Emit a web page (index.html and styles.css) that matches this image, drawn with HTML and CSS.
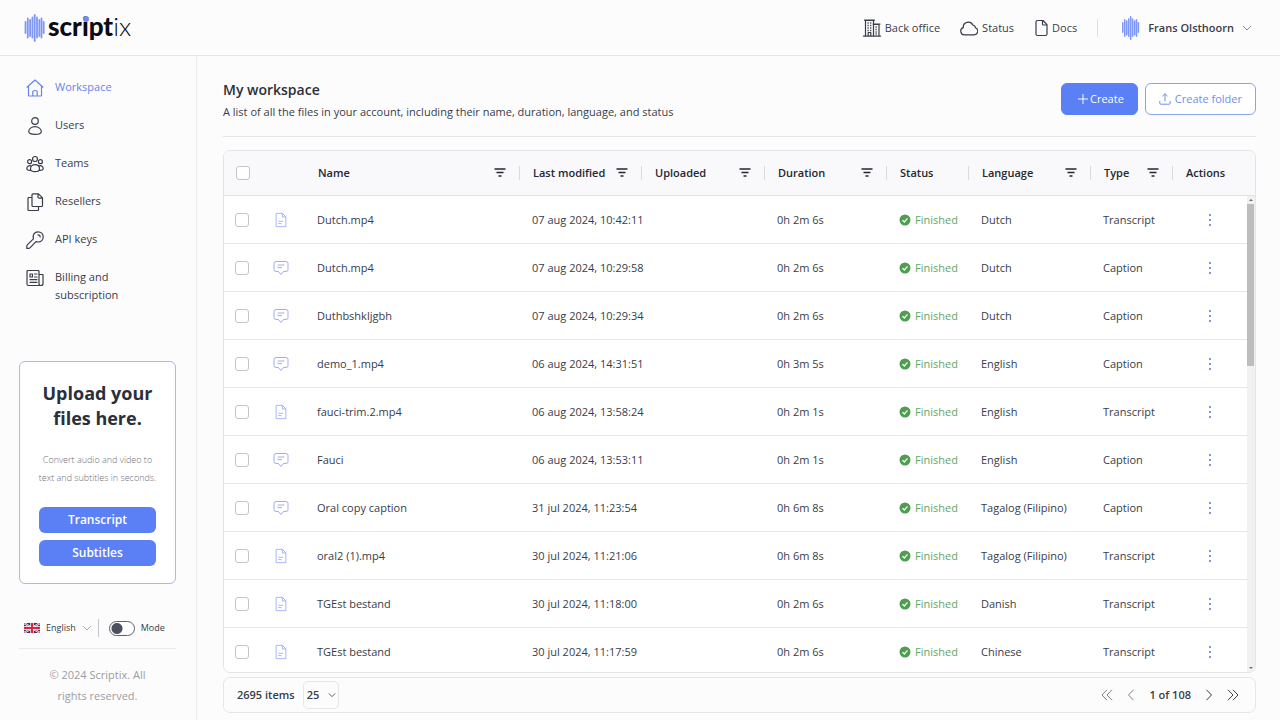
FILE: index.html
```html
<!DOCTYPE html>
<html lang="en">
<head>
    <meta charset="UTF-8">
    <meta name="viewport" content="width=device-width, initial-scale=1.0">
    <title>My workspace</title>
    <link rel="stylesheet" href="styles.css">
</head>
<body>
    <!-- shared icons -->
    <svg class="sprite" aria-hidden="true">
        <symbol id="wave" viewBox="0 0 20 28">
            <path d="M1 8v11M3.300 4.500v19M5.600 6v16M7.900 3.500v20M10.200 1v26M12.500 3.500v20M14.800 6v16M17 4.500v19M19.200 8v11" stroke="currentColor" stroke-width="1.800" stroke-linecap="round"/>
        </symbol>
        <symbol id="doc" viewBox="0 0 14 18">
            <path d="M1.500 1.500h7l4 4v11h-11zM8.500 1.500v4h4M4 10.500h5.500M4 13h3.500"/>
        </symbol>
        <symbol id="bubble" viewBox="0 0 16 16">
            <path d="M3 1.500h10a2 2 0 0 1 2 2v6a2 2 0 0 1-2 2h-2.500L8 14.500l-2.500-3H3a2 2 0 0 1-2-2v-6a2 2 0 0 1 2-2zM4.500 5h7M4.500 7.500H9"/>
        </symbol>
        <symbol id="filter" viewBox="0 0 12 12">
            <path d="M.5 2h11M2.500 5.500h7M4.500 9h3"/>
        </symbol>
        <symbol id="check" viewBox="0 0 12 12">
            <circle cx="6" cy="6" r="5.500" fill="#4f9d50"/>
            <path d="M3.500 6.200l1.800 1.800 3.200-3.700" stroke="#fff" stroke-width="1.200"/>
        </symbol>
        <symbol id="chevron" viewBox="0 0 10 10">
            <path d="M1 3l4 4 4-4"/>
        </symbol>
    </svg>

    <header class="topbar">
        <a class="logo" href="#" aria-label="scriptix">
            <svg class="logo-mark"><use href="#wave"/></svg>
            <span class="logo-text"><b>scr<span class="dot-i">i</span>pt</b>ix</span>
        </a>
        <nav class="top-links">
            <a href="#">
                <svg class="icon" viewBox="0 0 18 18"><path d="M.5 17.200h17M2.500 17V1.500h8V17M1.500 1.200h10M10.500 5.500h5.500V17M10 5h7M7.800 17v-3.500H5.200V17"/><path d="M4.500 4h4M4.500 6.500h4M4.500 9h4M4.500 11.500h4M12.500 8h2M12.500 10.500h2M12.500 13h2M12.500 15h2" stroke-dasharray="1.200 1.400" stroke-width="1.500" stroke-linecap="butt"/></svg>
                Back office
            </a>
            <a href="#">
                <svg class="icon" viewBox="0 0 18 18"><path d="M4.200 15.800h9.800a3.600 3.600 0 0 0 1.300-7A3 3 0 0 0 12.800 6 5 5 0 0 0 3.300 8.600 3.700 3.700 0 0 0 4.200 15.800z"/></svg>
                Status
            </a>
            <a href="#">
                <svg class="icon docs" viewBox="0 0 14 18"><path d="M3.500 1.500h5.500l4 4.200v9.300a1.500 1.500 0 0 1-1.500 1.500h-8A1.500 1.500 0 0 1 2 15V3a1.500 1.500 0 0 1 1.500-1.500zM8.500 1.500V5a1 1 0 0 0 1 1H13"/></svg>
                Docs
            </a>
        </nav>
        <button class="user" type="button">
            <svg class="user-mark"><use href="#wave"/></svg>
            Frans Olsthoorn
            <svg class="chevron"><use href="#chevron"/></svg>
        </button>
    </header>

    <div class="layout">
        <aside class="sidebar">
            <nav class="menu">
                <a class="active" href="#">
                    <svg class="icon" viewBox="0 0 18 18"><path d="M1 8.200L9 1l8 7.200M2.500 7v9.500q0 .5.5.5h12q.5 0 .5-.5V7M6.800 17v-4.200q0-1.300 2.200-1.300t2.200 1.300V17"/></svg>
                    Workspace
                </a>
                <a href="#">
                    <svg class="icon" viewBox="0 0 18 18"><circle cx="9" cy="4" r="3.300"/><path d="M2.700 14.500a6.300 4.800 0 0 1 12.600 0c0 1.800-2.400 2.900-6.300 2.900s-6.300-1.100-6.300-2.900z"/></svg>
                    Users
                </a>
                <a href="#">
                    <svg class="icon" viewBox="0 0 18 18"><circle cx="9" cy="4" r="2.500"/><circle cx="3.600" cy="6.700" r="2"/><circle cx="14.400" cy="6.700" r="2"/><path d="M4.500 14c0-2.500 1.800-4.300 4.500-4.300s4.500 1.800 4.500 4.300c0 1.800-1.700 2.700-4.500 2.700S4.500 15.800 4.500 14zM4.800 10.800C2.600 10.300.8 11.600.8 13.500c0 1.500 1.300 2 4 1.800M13.200 10.800c2.200-.5 4 .8 4 2.700 0 1.500-1.300 2-4 1.800"/></svg>
                    Teams
                </a>
                <a href="#">
                    <svg class="icon" viewBox="0 0 18 18"><path d="M7 .8h5.500l4 4v7.700q0 1-1 1H7q-1 0-1-1V1.800q0-1 1-1zM12 1v3q0 1.200 1.200 1.200h3M6 4.500H3q-1 0-1 1v11q0 1 1 1h8.500q1 0 1-1v-3"/></svg>
                    Resellers
                </a>
                <a href="#">
                    <svg class="icon" viewBox="0 0 18 18"><path d="M12 .8c3 0 5.200 2 5.200 5s-2.200 5.200-5 5.200c-.8 0-1.500-.1-2.200-.4L4.200 16.600q-.7.7-1.700.7H.8v-1.900q0-1 .7-1.700l5.900-5.800C6.200 4 8.500.8 12 .8zM12 3.800q2 0 2.200 2.200"/></svg>
                    API keys
                </a>
                <a href="#">
                    <svg class="icon" viewBox="0 0 18 18"><path d="M13 15V2.500q0-1-1-1H2q-1 0-1 1V15q0 1.500 1.500 1.500H15q2 0 2-2V5.500h-4M13 14.500q0 2 1.800 2M4 5h2.500v3H4zM8.500 5H11M8.500 8H11M4 10.700h7M4 13.300h7"/></svg>
                    Billing and subscription
                </a>
            </nav>

            <section class="upload">
                <h2>Upload your files here.</h2>
                <p>Convert audio and video to text and subtitles in seconds.</p>
                <button type="button">Transcript</button>
                <button type="button">Subtitles</button>
            </section>

            <div class="settings">
                <button class="language" type="button">
                    <svg class="flag" viewBox="0 0 16 10"><path fill="#26346f" d="M0 0h16v10H0z"/><path d="M0 0l16 10M16 0L0 10" stroke="#fff" stroke-width="2"/><path d="M0 0l16 10M16 0L0 10" stroke="#d5273e" stroke-width=".8"/><path d="M8 0v10M0 5h16" stroke="#fff" stroke-width="3.400"/><path d="M8 0v10M0 5h16" stroke="#d5273e" stroke-width="2"/></svg>
                    English
                    <svg class="chevron"><use href="#chevron"/></svg>
                </button>
                <label class="mode">
                    <input type="checkbox" role="switch">
                    Mode
                </label>
            </div>
            <p class="copyright">© 2024 Scriptix. All rights reserved.</p>
        </aside>

        <main class="content">
            <div class="page-head">
                <div>
                    <h1>My workspace</h1>
                    <p>A list of all the files in your account, including their name, duration, language, and status</p>
                </div>
                <div class="buttons">
                    <button class="btn btn-primary" type="button">
                        <svg viewBox="0 0 12 12"><path d="M6 1v10M1 6h10"/></svg>Create
                    </button>
                    <button class="btn" type="button">
                        <svg viewBox="0 0 12 12"><path d="M6 8.500V.8M3.500 3.200L6 .8l2.500 2.400M.8 8v2.200q0 1 1 1h8.400q1 0 1-1V8"/></svg>Create folder
                    </button>
                </div>
            </div>

            <div class="table-frame">
                <table class="files">
                    <thead>
                        <tr>
                            <th><input type="checkbox" aria-label="Select all"></th>
                            <th></th>
                            <th class="split">Name <svg><use href="#filter"/></svg></th>
                            <th class="split">Last modified <svg><use href="#filter"/></svg></th>
                            <th class="split">Uploaded <svg><use href="#filter"/></svg></th>
                            <th class="split">Duration <svg><use href="#filter"/></svg></th>
                            <th class="split">Status</th>
                            <th class="split">Language <svg><use href="#filter"/></svg></th>
                            <th class="split">Type <svg><use href="#filter"/></svg></th>
                            <th>Actions</th>
                        </tr>
                    </thead>
                    <tbody id="rows"></tbody>
                </table>
                <div class="scrollbar" aria-hidden="true">
                    <svg viewBox="0 0 8 8"><path d="M2 5h4L4 3z"/></svg>
                    <div class="thumb"></div>
                    <svg viewBox="0 0 8 8"><path d="M2 3h4L4 5z"/></svg>
                </div>
            </div>

            <div class="pager">
                <label for="per-page">2695 items</label>
                <div class="select-box">
                    <select id="per-page">
                        <option>25</option>
                    </select>
                    <svg class="chevron"><use href="#chevron"/></svg>
                </div>
                <div class="pages">
                    <button type="button" aria-label="First page" disabled><svg viewBox="0 0 12 12"><path d="M6 .8L1 6l5 5.200M11 .8L6 6l5 5.200"/></svg></button>
                    <button type="button" aria-label="Previous page" disabled><svg viewBox="0 0 12 12"><path d="M8.500.8l-5 5.200 5 5.200"/></svg></button>
                    <span>1 of 108</span>
                    <button type="button" aria-label="Next page"><svg viewBox="0 0 12 12"><path d="M3.500.8l5 5.200-5 5.200"/></svg></button>
                    <button type="button" aria-label="Last page"><svg viewBox="0 0 12 12"><path d="M1 .8L6 6l-5 5.200M6 .8L11 6l-5 5.200"/></svg></button>
                </div>
            </div>
        </main>
    </div>

    <script>
        let files = [
            {name: 'Dutch.mp4', modified: '07 aug 2024, 10:42:11', duration: '0h 2m 6s', language: 'Dutch', type: 'Transcript'},
            {name: 'Dutch.mp4', modified: '07 aug 2024, 10:29:58', duration: '0h 2m 6s', language: 'Dutch', type: 'Caption'},
            {name: 'Duthbshkljgbh', modified: '07 aug 2024, 10:29:34', duration: '0h 2m 6s', language: 'Dutch', type: 'Caption'},
            {name: 'demo_1.mp4', modified: '06 aug 2024, 14:31:51', duration: '0h 3m 5s', language: 'English', type: 'Caption'},
            {name: 'fauci-trim.2.mp4', modified: '06 aug 2024, 13:58:24', duration: '0h 2m 1s', language: 'English', type: 'Transcript'},
            {name: 'Fauci', modified: '06 aug 2024, 13:53:11', duration: '0h 2m 1s', language: 'English', type: 'Caption'},
            {name: 'Oral copy caption', modified: '31 jul 2024, 11:23:54', duration: '0h 6m 8s', language: 'Tagalog (Filipino)', type: 'Caption'},
            {name: 'oral2 (1).mp4', modified: '30 jul 2024, 11:21:06', duration: '0h 6m 8s', language: 'Tagalog (Filipino)', type: 'Transcript'},
            {name: 'TGEst bestand', modified: '30 jul 2024, 11:18:00', duration: '0h 2m 6s', language: 'Danish', type: 'Transcript'},
            {name: 'TGEst bestand', modified: '30 jul 2024, 11:17:59', duration: '0h 2m 6s', language: 'Chinese', type: 'Transcript'},
        ];

        let rows = '';
        for (const file of files) {
            rows += `<tr>
                <td><input type="checkbox" aria-label="Select ${file.name}"></td>
                <td><svg class="file-icon"><use href="#${file.type == 'Caption' ? 'bubble' : 'doc'}"/></svg></td>
                <td>${file.name}</td>
                <td>${file.modified}</td>
                <td></td>
                <td>${file.duration}</td>
                <td class="finished"><svg><use href="#check"/></svg>Finished</td>
                <td>${file.language}</td>
                <td>${file.type}</td>
                <td class="actions"><button type="button" aria-label="Actions"><i></i><i></i><i></i></button></td>
            </tr>`;
        }
        document.getElementById('rows').innerHTML = rows;
    </script>
</body>
</html>
```
FILE: styles.css
```css
* {
    box-sizing: border-box;
}

body {
    margin: 0;
    height: 100vh;
    display: flex;
    flex-direction: column;
    background: #fdfcfd;
    color: #373d49;
    font-family: "Open Sans", "Noto Sans", sans-serif;
    font-size: 11px;
    line-height: 18px;
}

a {
    color: inherit;
    text-decoration: none;
}

button,
select {
    font: inherit;
    color: inherit;
    background: none;
    border: 0;
    padding: 0;
    cursor: pointer;
}

h1, h2, p {
    margin: 0;
}

svg {
    fill: none;
    stroke: currentColor;
    flex-shrink: 0;
}

.sprite {
    position: absolute;
    width: 0;
    height: 0;
}

.icon {
    width: 18px;
    height: 18px;
    stroke-width: 1.2;
    stroke-linejoin: round;
    stroke-linecap: round;
}

.chevron {
    width: 10px;
    height: 10px;
}

/* top bar */

.topbar {
    height: 56px;
    flex-shrink: 0;
    display: flex;
    align-items: center;
    padding: 0 28px 0 24px;
    border-bottom: 1px solid #e6e6e9;
}

.logo {
    display: flex;
    align-items: center;
    gap: 3px;
    margin-right: auto;
}

.logo-mark {
    width: 21px;
    height: 28px;
    color: #7f98f4;
}

.logo-text {
    font-family: Lato, sans-serif;
    font-size: 26px;
    line-height: 28px;
    padding-bottom: 4px;
    font-weight: 300;
    color: #0c0c10;
}

.logo-text b {
    font-weight: 900;
}

.dot-i {
    position: relative;
}

.dot-i::after {
    content: "";
    position: absolute;
    left: 1px;
    top: 6px;
    width: 6px;
    height: 6px;
    border-radius: 3px;
    background: #6f8bf2;
}

.top-links {
    display: flex;
    gap: 20px;
    padding-right: 20px;
    border-right: 1px solid #e0e0e4;
}

.top-links a {
    display: flex;
    align-items: center;
    gap: 4px;
}

.top-links .docs {
    width: 14px;
}

.user {
    display: flex;
    align-items: center;
    gap: 8px;
    margin-left: 23px;
    font-weight: 600;
}

.user-mark {
    width: 19px;
    height: 24px;
    color: #7f98f4;
}

.user .chevron {
    color: #8b8e96;
}

/* sidebar */

.layout {
    flex: 1;
    min-height: 0;
    display: flex;
}

.sidebar {
    width: 197px;
    flex-shrink: 0;
    display: flex;
    flex-direction: column;
    padding: 22px 20px 14px 19px;
    border-right: 1px solid #ececef;
}

.menu {
    display: flex;
    flex-direction: column;
    gap: 19px;
    padding: 0 20px 0 7px;
    font-weight: 500;
}

.menu a {
    display: flex;
    gap: 11px;
}

.menu .icon {
    margin-top: 1px;
}

.menu .active {
    color: #6683ee;
}

.upload {
    display: flex;
    flex-direction: column;
    gap: 7px;
    margin-top: auto;
    padding: 19px 19px 17px;
    background: #fff;
    border: 1px solid #a9b9f3;
    border-radius: 6px;
    text-align: center;
}

.upload h2 {
    font-size: 18px;
    line-height: 25px;
    font-weight: 700;
    color: #2b2f3a;
}

.upload p {
    margin: 13px -4px;
    font-size: 9px;
    font-weight: 300;
    color: #6d7079;
}

.upload button {
    height: 26px;
    background: #5b7ff5;
    border-radius: 6px;
    color: #fff;
    font-size: 12px;
    font-weight: 600;
}

.settings {
    display: flex;
    align-items: center;
    margin-top: 35px;
    padding: 0 0 11px 5px;
    border-bottom: 1px solid #e9e9ec;
    font-size: 9px;
}

.language {
    display: flex;
    align-items: center;
    gap: 6px;
    padding-right: 6px;
    border-right: 1px solid #c5c5cb;
}

.language .chevron {
    color: #a9a9b0;
}

.flag {
    width: 16px;
    height: 10px;
    stroke: none;
}

.mode {
    display: flex;
    align-items: center;
    gap: 6px;
    margin-left: 10px;
}

.mode input {
    appearance: none;
    width: 26px;
    height: 15px;
    margin: 0;
    border: 1px solid #5a606c;
    border-radius: 8px;
    background: radial-gradient(circle at 7px 50%, #4a505d 5px, #fff 6px);
}

.copyright {
    padding: 15px 20px 0;
    line-height: 21px;
    text-align: center;
    color: #9a9ca4;
}

/* workspace */

.content {
    flex: 1;
    min-width: 0;
    display: flex;
    flex-direction: column;
    padding: 23px 24px 7px 26px;
}

.page-head {
    display: flex;
    justify-content: space-between;
    padding-bottom: 15px;
    margin-bottom: 13px;
    border-bottom: 1px solid #e6e6e9;
}

.page-head h1 {
    font-size: 14px;
    line-height: 22px;
    font-weight: 600;
    color: #2b2f3a;
    margin-bottom: 2px;
}

.buttons {
    display: flex;
    gap: 7px;
    padding-top: 4px;
}

.btn {
    display: flex;
    align-items: center;
    gap: 4px;
    height: 32px;
    padding: 0 13px;
    border: 1px solid #8ba2f3;
    border-radius: 6px;
    background: #fff;
    color: #718cf0;
}

.btn svg {
    width: 12px;
    height: 12px;
}

.btn-primary {
    gap: 1px;
    padding: 0 13px 0 15px;
    border-color: #5b7ff5;
    background: #5b7ff5;
    color: #fff;
}

.table-frame {
    position: relative;
    flex: 1;
    min-height: 0;
    background: #fff;
    border: 1px solid #e4e4e8;
    border-radius: 7px;
    overflow: hidden;
}

.files {
    display: flex;
    flex-direction: column;
    height: 100%;
}

.files thead {
    display: block;
    padding: 0 7px 0 1px;
    background: #f9f9fc;
    border-bottom: 1px solid #e2e2e6;
}

.files tbody {
    display: block;
    flex: 1;
    min-height: 0;
    margin-right: 8px;
    overflow-y: auto;
    scrollbar-width: none;
}

.files tr {
    display: grid;
    grid-template-columns: 38px 42px minmax(150px, 1fr) 122px 123px 122px 82px 122px 82px 75px;
}

.files th,
.files td {
    display: flex;
    align-items: center;
    padding: 0 0 0 13px;
    white-space: nowrap;
}

.files th {
    height: 44px;
    font-weight: 600;
    color: #24272f;
}

.files th svg {
    width: 12px;
    height: 12px;
    margin: 0 14px 0 auto;
    stroke-width: 1.3;
}

.files .split {
    background: linear-gradient(#d9d9de, #d9d9de) right center / 1px 14px no-repeat;
}

.files td {
    height: 48px;
    border-bottom: 1px solid #e6e6e9;
}

.files th:first-child,
.files td:first-child {
    padding-left: 11px;
}

.files input {
    appearance: none;
    width: 14px;
    height: 14px;
    margin: 0;
    border: 1px solid #c3c4c9;
    border-radius: 3px;
    background: #fff;
}

.file-icon {
    width: 16px;
    height: 16px;
    margin-left: -2px;
    color: #9daef5;
}

.finished {
    gap: 4px;
    color: #64a765;
}

.finished svg {
    width: 12px;
    height: 12px;
    stroke: none;
}

.files .actions {
    padding: 0;
    justify-content: center;
}

.actions button {
    display: flex;
    flex-direction: column;
    gap: 3px;
    padding: 4px;
}

.actions i {
    width: 2px;
    height: 2px;
    background: #7f9be0;
}

.scrollbar {
    position: absolute;
    top: 45px;
    right: 0;
    bottom: 0;
    width: 8px;
    display: flex;
    flex-direction: column;
    justify-content: space-between;
    background: #f1f1f2;
}

.scrollbar svg {
    width: 8px;
    height: 8px;
    fill: #6d6d70;
    stroke: none;
}

.thumb {
    height: 34%;
    margin: 0 1px auto 0;
    background: #bdbdbf;
}

/* pager */

.pager {
    display: flex;
    align-items: center;
    gap: 8px;
    height: 36px;
    margin-top: 4px;
    padding: 0 16px 0 13px;
    border: 1px solid #e6e6e9;
    border-radius: 7px;
    font-weight: 600;
}

.select-box {
    display: flex;
    align-items: center;
    position: relative;
}

.select-box select {
    appearance: none;
    width: 36px;
    height: 28px;
    padding-left: 3px;
    border: 1px solid #e6e6e9;
    border-radius: 5px;
}

.select-box .chevron {
    position: absolute;
    right: 3px;
    width: 8px;
    pointer-events: none;
}

.pages {
    display: flex;
    align-items: center;
    gap: 12px;
    margin-left: auto;
}

.pages button {
    display: flex;
}

.pages button:disabled {
    color: #7c808a;
}

.pages svg {
    width: 12px;
    height: 12px;
}
```
